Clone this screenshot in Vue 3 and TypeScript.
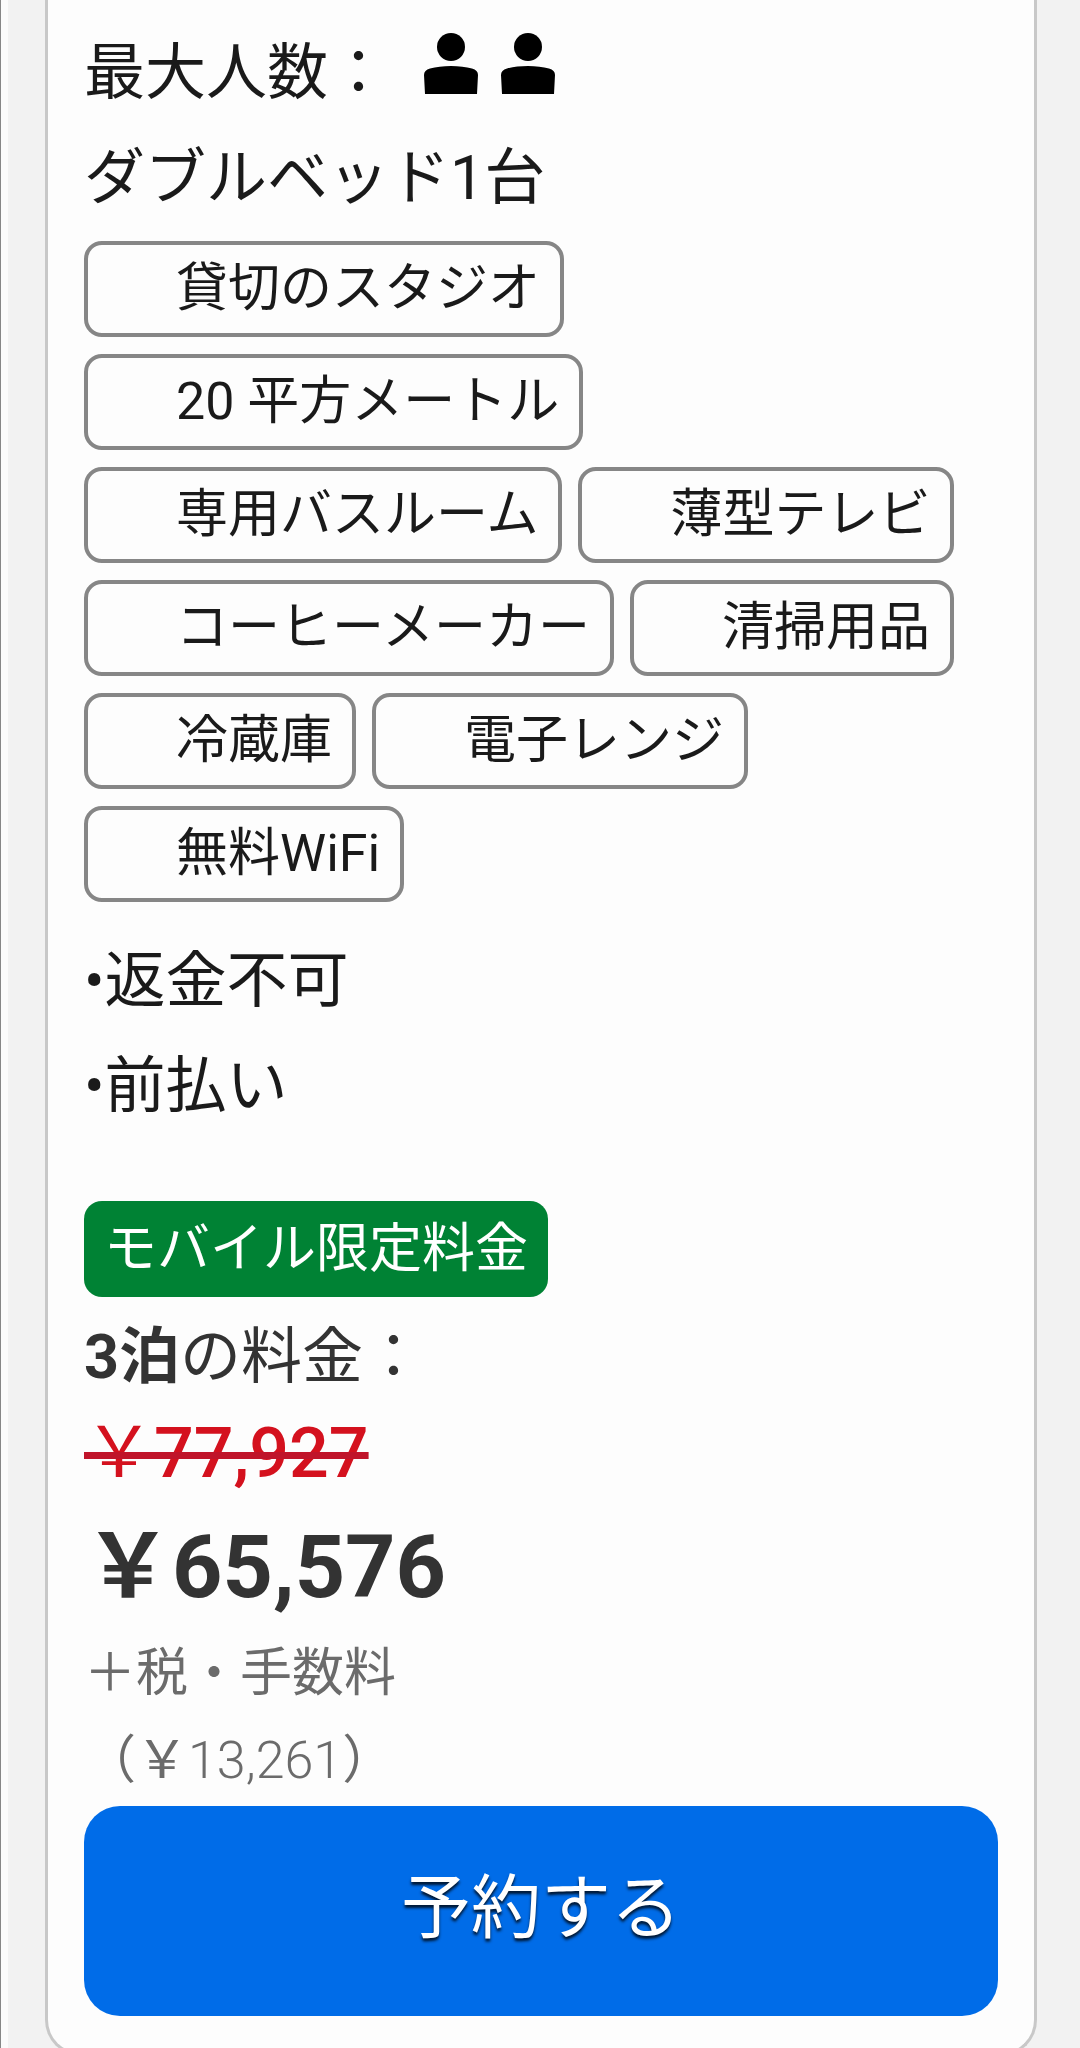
<script setup lang="ts">
interface Price {
  nights: number
  original: string
  current: string
  taxes: string
}

const maxGuests = 2

const facilityRows: string[][] = [
  ['貸切のスタジオ'],
  ['20 平方メートル'],
  ['専用バスルーム', '薄型テレビ'],
  ['コーヒーメーカー', '清掃用品'],
  ['冷蔵庫', '電子レンジ'],
  ['無料WiFi'],
]

const policies: string[] = ['返金不可', '前払い']

const price: Price = {
  nights: 3,
  original: '77,927',
  current: '65,576',
  taxes: '13,261',
}
</script>

<template>
  <main class="page">
    <article class="card">
      <div class="occupancy">
        <span>最大人数：</span>
        <span class="guests" role="img" :aria-label="`${maxGuests}名`">
          <svg v-for="n in maxGuests" :key="n" class="guest" viewBox="0 0 54 62" aria-hidden="true">
            <ellipse cx="27" cy="14" rx="14" ry="14" />
            <path d="M1 61 L0 42 Q0 37 6 35.500 Q15 33 27 33 Q39 33 48 35.500 Q54 37 54 42 L53 61 Z" />
          </svg>
        </span>
      </div>
      <p class="line">ダブルベッド1台</p>

      <div class="facilities">
        <ul v-for="(row, i) in facilityRows" :key="i" class="facility-row">
          <li v-for="name in row" :key="name" class="chip">{{ name }}</li>
        </ul>
      </div>

      <ul class="policies">
        <li v-for="policy in policies" :key="policy" class="line">•{{ policy }}</li>
      </ul>

      <section class="pricing">
        <span class="badge">モバイル限定料金</span>
        <p class="nights"><b>{{ price.nights }}泊</b>の料金：</p>
        <p class="original"><s><span class="yen">￥</span>{{ price.original }}</s></p>
        <p class="current">￥{{ price.current }}</p>
        <p class="taxes">＋税・手数料</p>
        <p class="taxes">（￥<span class="light">{{ price.taxes }}</span>）</p>
      </section>

      <button type="button" class="reserve">予約する</button>
    </article>
  </main>
</template>

<style>
html {
  scrollbar-width: none;
}

body {
  margin: 0;
  background: #f2f2f2;
}
</style>

<style scoped>
.page {
  box-sizing: border-box;
  min-height: 100vh;
  padding: 0 43px 0 37px;
  border-left: 1px solid #868686;
  box-shadow: inset 7px 0 0 #fbfbfb;
  background: #f2f2f2;
  font-family: Roboto, "Noto Sans CJK JP", sans-serif;
  color: #1a1a1a;
}

.card {
  box-sizing: border-box;
  margin-left: 7px;
  padding: 21px 36px 37px;
  border: 3px solid #c8c8c8;
  border-top: 0;
  border-radius: 0 0 36px 36px;
  background: #fdfdfd;
}

p,
ul {
  margin: 0;
  padding: 0;
  list-style: none;
}

.occupancy {
  display: flex;
  align-items: center;
  gap: 35px;
  font-size: 61px;
  line-height: 105px;
}

.guests {
  display: flex;
  gap: 23px;
  padding-bottom: 20px;
}

.guest {
  display: block;
  width: 54px;
  height: 62px;
  fill: #000;
}

.line {
  font-size: 61px;
  line-height: 105px;
}

.facilities {
  display: flex;
  flex-direction: column;
  gap: 17px;
  margin-top: 10px;
}

.facility-row {
  display: flex;
  flex-wrap: wrap;
  gap: 16px;
}

.chip {
  padding: 0 20px 0 88px;
  border: 4px solid #868686;
  border-radius: 18px;
  font-size: 52px;
  line-height: 88px;
}

.policies {
  margin-top: 27px;
}

.pricing {
  margin-top: 62px;
  color: #333;
}

.badge {
  display: block;
  width: fit-content;
  padding: 0 20px;
  border-radius: 18px;
  background: #008234;
  color: #fff;
  font-size: 53px;
  line-height: 96px;
}

.nights {
  margin-top: 15px;
  font-size: 61px;
  line-height: 90px;
}

.original {
  color: #d4111e;
  font-size: 70px;
  font-weight: 500;
  line-height: 102px;
}

.original s {
  text-decoration-color: #c0142a;
  text-decoration-thickness: 7px;
}

.yen {
  font-weight: 400;
}

.current {
  font-size: 88px;
  font-weight: 700;
  line-height: 126px;
}

.taxes {
  color: #6b6b6b;
  font-size: 52px;
  line-height: 87px;
}

.light {
  font-weight: 300;
}

.reserve {
  display: block;
  width: 100%;
  height: 210px;
  margin-top: 2px;
  padding: 0 0 4px;
  border: 0;
  border-radius: 36px;
  background: #006ce8;
  color: #fff;
  font-family: inherit;
  font-size: 70px;
  line-height: 100px;
  text-shadow: 0 3px 3px rgba(0, 0, 0, 0.8);
}
</style>
